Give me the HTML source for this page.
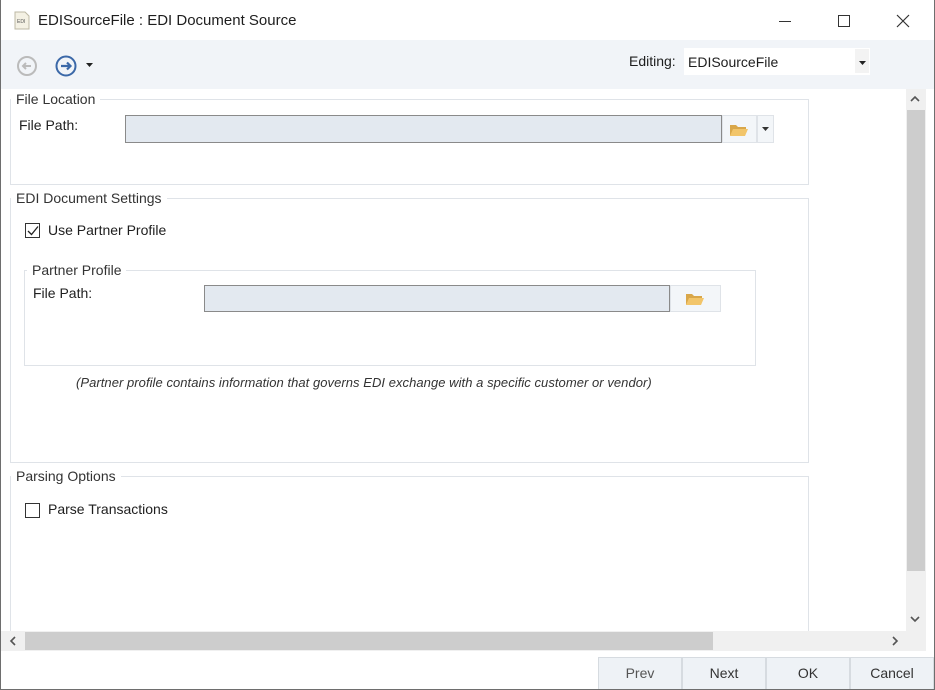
<!DOCTYPE html>
<html><head><style>
*{box-sizing:border-box;margin:0;padding:0}
body{width:935px;height:690px;overflow:hidden;font-family:"Liberation Sans",sans-serif;font-size:14px;color:#1e1e1e;background:#fff;position:relative}
.a{position:absolute}
.win{left:0;top:0;width:935px;height:690px;border:1px solid #6e6e6e;border-top:none}
.gb{border:1px solid #dfe3e8}
.lg{background:#fff;padding:0 5px;font-size:14px;color:#333}
.inp{background:#e3e9f0;border:1px solid #8a8a8a}
.cb{width:15px;height:15px;border:1px solid #333;background:#fff}
.fb{background:#f3f6f9;border:1px solid #dfe3e8}
.bb{top:657px;height:33px;background:#eef2f6;border:1px solid #d6dbe0;text-align:center;line-height:31px;color:#333}
</style></head><body>
<div class="a" style="left:0;top:0;width:935px;height:40px;background:#fff"></div>
<svg class="a" style="left:14px;top:11px" width="16" height="19"><path d="M1 1h10l4 4v13H1z" fill="#f4f1e4" stroke="#bdb8a4"/><text x="3" y="12" font-size="5" fill="#555" font-family="Liberation Sans">EDI</text></svg>
<div class="a" style="left:38px;top:12px;font-size:15px">EDISourceFile : EDI Document Source</div>
<div class="a" style="left:779px;top:21px;width:12px;height:1px;background:#333"></div>
<div class="a" style="left:838px;top:15px;width:12px;height:12px;border:1px solid #333"></div>
<svg class="a" style="left:896px;top:14px" width="14" height="14"><path d="M1 1L13 13M13 1L1 13" stroke="#333" stroke-width="1.2"/></svg>
<div class="a" style="left:0;top:40px;width:935px;height:49px;background:#f1f4f8"></div>
<svg class="a" style="left:16px;top:55px" width="22" height="22"><circle cx="11" cy="11" r="9" fill="none" stroke="#bbb" stroke-width="2"/><path d="M15 11H7M10 8L7 11L10 14" stroke="#bbb" stroke-width="2" fill="none"/></svg>
<svg class="a" style="left:54px;top:54px" width="24" height="24"><circle cx="12" cy="12" r="9.5" fill="none" stroke="#3b68a8" stroke-width="2"/><path d="M7 12H16M13 8.5L16.5 12L13 15.5" stroke="#3b68a8" stroke-width="2.2" fill="none"/></svg>
<svg class="a" style="left:86px;top:63px" width="7" height="5"><path d="M0 0h7L3.5 4z" fill="#222"/></svg>
<div class="a" style="left:629px;top:53px;font-size:14px">Editing:</div>
<div class="a" style="left:684px;top:48px;width:186px;height:27px;background:#fff"></div>
<div class="a" style="left:688px;top:54px;font-size:14px">EDISourceFile</div>
<div class="a" style="left:855px;top:49px;width:14px;height:24px;background:#f3f3f3"></div>
<svg class="a" style="left:859px;top:61px" width="7" height="4"><path d="M0 0h7L3.5 4z" fill="#222"/></svg>

<div class="a gb" style="left:10px;top:99px;width:799px;height:86px"></div>
<div class="a lg" style="left:11px;top:91px">File Location</div>
<div class="a" style="left:19px;top:117px">File Path:</div>
<div class="a inp" style="left:125px;top:115px;width:597px;height:28px"></div>
<div class="a fb" style="left:722px;top:115px;width:35px;height:28px"></div>
<svg class="a" style="left:729px;top:123px" width="20" height="14"><path d="M1 2h6l2 2h8v2H5L1 13z" fill="#d9a74a"/><path d="M4 6h15l-3 7H1z" fill="#f2c56a"/></svg>
<div class="a fb" style="left:757px;top:115px;width:17px;height:28px"></div>
<svg class="a" style="left:762px;top:127px" width="7" height="4"><path d="M0 0h7L3.5 4z" fill="#333"/></svg>

<div class="a gb" style="left:10px;top:198px;width:799px;height:265px"></div>
<div class="a lg" style="left:11px;top:190px">EDI Document Settings</div>
<div class="a cb" style="left:25px;top:223px"></div>
<svg class="a" style="left:27px;top:225px" width="12" height="11"><path d="M1 6l3.5 3.5L11 1.5" stroke="#222" stroke-width="1.3" fill="none"/></svg>
<div class="a" style="left:48px;top:222px">Use Partner Profile</div>
<div class="a gb" style="left:24px;top:270px;width:732px;height:96px"></div>
<div class="a lg" style="left:27px;top:262px">Partner Profile</div>
<div class="a" style="left:33px;top:285px">File Path:</div>
<div class="a inp" style="left:204px;top:285px;width:466px;height:27px"></div>
<div class="a fb" style="left:670px;top:285px;width:51px;height:27px"></div>
<svg class="a" style="left:685px;top:292px" width="20" height="14"><path d="M1 2h6l2 2h8v2H5L1 13z" fill="#d9a74a"/><path d="M4 6h15l-3 7H1z" fill="#f2c56a"/></svg>
<div class="a" style="left:76px;top:375px;font-size:13px;letter-spacing:0.05px;font-style:italic;color:#333;white-space:nowrap">(Partner profile contains information that governs EDI exchange with a specific customer or vendor)</div>

<div class="a gb" style="left:10px;top:476px;width:799px;height:170px"></div>
<div class="a lg" style="left:11px;top:468px">Parsing Options</div>
<div class="a cb" style="left:25px;top:503px"></div>
<div class="a" style="left:48px;top:501px">Parse Transactions</div>

<div class="a" style="left:906px;top:89px;width:20px;height:543px;background:#f0f0f0"></div>
<div class="a" style="left:907px;top:110px;width:18px;height:461px;background:#cdcdcd"></div>
<svg class="a" style="left:910px;top:95px" width="10" height="7"><path d="M1 6l4-4 4 4" stroke="#555" stroke-width="1.6" fill="none"/></svg>
<svg class="a" style="left:910px;top:616px" width="10" height="7"><path d="M1 1l4 4 4-4" stroke="#555" stroke-width="1.6" fill="none"/></svg>
<div class="a" style="left:1px;top:631px;width:925px;height:20px;background:#f0f0f0"></div>
<div class="a" style="left:25px;top:632px;width:688px;height:18px;background:#cdcdcd"></div>
<svg class="a" style="left:9px;top:636px" width="7" height="10"><path d="M6 1L2 5l4 4" stroke="#555" stroke-width="1.6" fill="none"/></svg>
<svg class="a" style="left:892px;top:636px" width="7" height="10"><path d="M1 1l4 4-4 4" stroke="#555" stroke-width="1.6" fill="none"/></svg>

<div class="a bb" style="left:598px;width:84px;color:#555">Prev</div>
<div class="a bb" style="left:682px;width:84px">Next</div>
<div class="a bb" style="left:766px;width:84px">OK</div>
<div class="a bb" style="left:850px;width:84px">Cancel</div>
<div class="a win"></div>
</body></html>
